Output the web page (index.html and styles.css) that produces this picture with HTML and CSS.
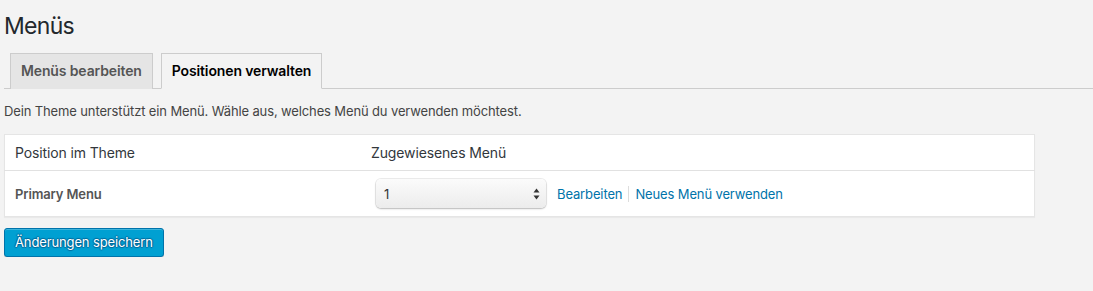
FILE: index.html
```html
<!DOCTYPE html>
<html lang="de">
<head>
<meta charset="utf-8">
<title>Menüs</title>
<link rel="stylesheet" href="styles.css">
</head>
<body>
<div class="wrap">
  <h1 class="page-title">Menüs</h1>
  <nav class="nav-tab-wrapper">
    <a class="nav-tab" href="#">Menüs bearbeiten</a>
    <a class="nav-tab nav-tab-active" href="#">Positionen verwalten</a>
  </nav>
  <p class="description">Dein Theme unterstützt ein Menü. Wähle aus, welches Menü du verwenden möchtest.</p>
  <table class="locations">
    <thead>
      <tr>
        <th class="col-location">Position im Theme</th>
        <th class="col-menu">Zugewiesenes Menü</th>
      </tr>
    </thead>
    <tbody>
      <tr>
        <td class="location-name">Primary Menu</td>
        <td class="menu-cell">
          <div class="menu-controls">
            <span class="select-wrap">
              <select class="menu-select">
                <option>1</option>
              </select>
              <svg class="select-arrows" width="7" height="12" viewBox="0 0 7 12" aria-hidden="true">
                <path d="M3.5 0.5 L6.5 4.5 L0.5 4.5 Z" fill="#333"/>
                <path d="M3.5 11.5 L6.5 7.5 L0.5 7.5 Z" fill="#333"/>
              </svg>
            </span>
            <span class="menu-links">
              <a class="menu-link" href="#">Bearbeiten</a>
              <a class="menu-link menu-link-sep" href="#">Neues Menü verwenden</a>
            </span>
          </div>
        </td>
      </tr>
    </tbody>
  </table>
  <div class="submit-row">
    <button class="button-primary" type="button">Änderungen speichern</button>
  </div>
</div>
</body>
</html>
```

FILE: styles.css
```css
html, body {
  margin: 0;
  padding: 0;
  background: #f3f3f3;
}
body {
  font-family: Inter, "Liberation Sans", Arial, sans-serif;
  color: #444;
  font-size: 13px;
  letter-spacing: -0.01em;
}
.wrap {
  padding: 11px 0 0 4px;
}
.page-title {
  margin: 0;
  font-size: 23px;
  font-weight: 400;
  line-height: 30px;
  color: #23282d;
  letter-spacing: -0.03em;
}
.nav-tab-wrapper {
  margin-top: 12px;
  display: flex;
  border-bottom: 1px solid #ccc;
  padding-left: 6px;
}
.nav-tab {
  display: block;
  padding: 5px 10px;
  font-size: 14px;
  line-height: 24px;
  font-weight: 600;
  border: 1px solid #ccc;
  border-bottom: none;
  background: #e5e5e5;
  color: #555;
  text-decoration: none;
  margin-bottom: -1px;
  margin-right: 8px;
}
.nav-tab-active {
  background: #f3f3f3;
  color: #000;
  border-bottom: 1px solid #f3f3f3;
}
.description {
  margin: 12px 0 13px;
  line-height: 20px;
  font-size: 13px;
  color: #444;
}
.locations {
  width: 1031px;
  border-collapse: collapse;
  background: #fff;
  border: 1px solid #e5e5e5;
  box-shadow: 0 1px 1px rgba(0,0,0,.04);
  table-layout: fixed;
}
.locations th {
  text-align: left;
  font-weight: 400;
  font-size: 14px;
  line-height: 20px;
  padding: 8px 10px 7px;
  color: #32373c;
  border-bottom: 1px solid #e1e1e1;
}
.col-location {
  width: 336px;
}
.locations td {
  padding: 8px 10px;
  vertical-align: middle;
}
.location-name {
  font-weight: 600;
  color: #555;
  font-size: 13px;
}
.menu-controls {
  display: flex;
  align-items: center;
  gap: 11px;
  padding-left: 5px;
}
.select-wrap {
  position: relative;
  display: block;
  width: 170px;
  height: 29px;
}
.menu-select {
  appearance: none;
  -webkit-appearance: none;
  width: 170px;
  height: 29px;
  margin: 0;
  padding: 0 20px 0 8px;
  border: none;
  border-radius: 5px;
  background: linear-gradient(#fbfbfb, #ececec);
  box-shadow: 0 0 0 1px rgba(0,0,0,.07), 0 1px 2px rgba(0,0,0,.22);
  font-family: inherit;
  font-size: 13px;
  color: #333;
}
.select-arrows {
  position: absolute;
  right: 6px;
  top: 9px;
  pointer-events: none;
}
.menu-links {
  display: flex;
  align-items: center;
}
.menu-link {
  color: #0073aa;
  text-decoration: none;
  font-size: 13px;
  line-height: 16px;
}
.menu-link-sep {
  margin-left: 6px;
  padding-left: 6px;
  border-left: 1px solid #ddd;
}
.submit-row {
  padding-top: 11px;
}
.button-primary {
  display: block;
  height: 29px;
  padding: 0 10px 1px;
  font-family: inherit;
  font-size: 13px;
  letter-spacing: -0.01em;
  color: #fff;
  background: #00a0d2;
  border: 1px solid #0073aa;
  border-radius: 3px;
  box-shadow: inset 0 1px 0 rgba(120,200,230,.5), 0 1px 0 rgba(0,0,0,.15);
  text-shadow: 0 -1px 1px #006799, 1px 0 1px #006799, 0 1px 1px #006799, -1px 0 1px #006799;
  cursor: pointer;
}
```
